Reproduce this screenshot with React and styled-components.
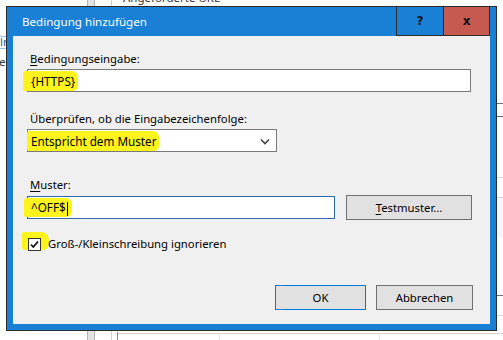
import styled, { createGlobalStyle } from 'styled-components';

const GlobalStyle = createGlobalStyle`
  html, body {
    margin: 0;
    padding: 0;
    background: #ffffff;
    font-family: "Noto Sans", "Segoe UI", sans-serif;
    font-size: 11.3px;
    color: #000;
  }
`;

// line remnants of the list view that sits behind the dialog
const lines = [
  ['#e3e3e3', 88, 0, 6, 340],
  ['#b4b4b4', 87, 0, 1, 340],
  ['#b4b4b4', 94, 0, 1, 340],
  ['#d0d0d0', 111, 0, 1, 340],
  ['#8a8a8a', 117, 332, 1, 8],
  ['#d6d6d6', 118, 333, 385, 1],
  ['#e6e6e6', 219, 334, 1, 6],
  ['#e6e6e6', 379, 334, 1, 6],
  ['#9ec5e8', 0, 36, 8, 1],
  ['#9ec5e8', 0, 48, 8, 1],
  ['#707070', 496, 103, 7, 1],
  ['#707070', 496, 116, 7, 1],
  ['#d8d8d8', 496, 177, 7, 1],
  ['#d8d8d8', 496, 197, 7, 1],
  ['#f6f6f6', 496, 198, 7, 40],
  ['#707070', 496, 295, 7, 1],
  ['#d8d8d8', 496, 315, 7, 1],
];

const Desktop = styled.div`
  position: relative;
  width: 503px;
  height: 340px;
  overflow: hidden;
  background-color: #fff;
  background-repeat: no-repeat;
  background-image: ${lines.map(([c]) => `linear-gradient(${c}, ${c})`).join(', ')};
  background-position: ${lines.map(([, x, y]) => `${x}px ${y}px`).join(', ')};
  background-size: ${lines.map(([, , , w, h]) => `${w}px ${h}px`).join(', ')};
`;

const BackText = styled.div`
  position: absolute;
  font-size: 11.5px;
  color: ${(p) => p.$color || '#333'};
  white-space: nowrap;
`;

const Dialog = styled.div`
  position: absolute;
  left: 6px;
  top: 6px;
  width: 489px;
  height: 323px;
  border: 1px solid #2b2b2b;
  background: #1a80d6;
  display: flex;
  flex-direction: column;
`;

const TitleBar = styled.div`
  height: 29px;
  display: flex;
  align-items: stretch;
  padding-right: 6px;
`;

const Title = styled.div`
  flex: 1;
  color: #fff;
  font-size: 11.6px;
  padding-left: 15px;
  display: flex;
  align-items: center;
`;

const CaptionButton = styled.div`
  width: ${(p) => p.$w}px;
  margin-top: -1px;
  height: 30px;
  box-sizing: border-box;
  border: 1px solid #2b2b2b;
  border-left: ${(p) => (p.$first ? '1px solid #2b2b2b' : 'none')};
  background: ${(p) => p.$bg};
  display: flex;
  align-items: center;
  justify-content: center;
  font-family: "DejaVu Sans", sans-serif;
  font-weight: bold;
  font-size: 12px;
  color: #111;
`;

const Body = styled.div`
  flex: 1;
  margin: 0 6px 6px 6px;
  background: #f0f0f0;
  padding: 15px 16px 14px 14px;
  display: flex;
  flex-direction: column;
`;

const Label = styled.div`
  line-height: 16px;
  height: 16px;
  padding-left: 3px;
  margin-top: ${(p) => p.$mt || 0}px;
  margin-bottom: 2px;
  u {
    text-decoration: underline;
    text-underline-offset: 2px;
  }
`;

const Field = styled.div`
  box-sizing: border-box;
  width: ${(p) => p.$w}px;
  height: 23px;
  background: #fff;
  border: 1px solid ${(p) => (p.$focused ? '#2a6aa8' : '#7a7a7a')};
  display: flex;
  align-items: center;
  padding-left: 3px;
  position: relative;
`;

const Mark = styled.span`
  background: #fcf41c;
  border-radius: 3px 6px 5px 2px;
  margin-left: ${(p) => -p.$l}px;
  padding: ${(p) => `${p.$t || 1}px ${p.$r}px ${p.$b || 1}px ${p.$l}px`};
  line-height: 16px;
  font-size: 11.7px;
  position: relative;
  z-index: 1;
`;

const Caret = styled.span`
  display: inline-block;
  width: 1px;
  height: 14px;
  background: #000;
  vertical-align: middle;
  margin-left: 1px;
`;

const Chevron = styled.svg`
  position: absolute;
  right: 6px;
  top: 8px;
`;

const Row = styled.div`
  display: flex;
  align-items: center;
  gap: 11px;
`;

const Button = styled.div`
  box-sizing: border-box;
  width: ${(p) => p.$w}px;
  height: 25px;
  background: #e1e1e1;
  border: 1px solid ${(p) => (p.$default ? '#0078d7' : '#707070')};
  display: flex;
  align-items: center;
  justify-content: center;
  u {
    text-decoration: underline;
    text-underline-offset: 2px;
  }
`;

const CheckRow = styled.div`
  margin-top: 15px;
  height: 18px;
  display: flex;
  align-items: center;
  gap: 7px;
  padding-left: 1px;
  position: relative;
`;

const CheckMark = styled.span`
  position: absolute;
  left: -5px;
  top: -3px;
  width: 27px;
  height: 18px;
  background: #fcf41c;
  border-radius: 2px 8px 6px 3px;
`;

const Box = styled.span`
  position: relative;
  z-index: 1;
  box-sizing: border-box;
  width: 13px;
  height: 13px;
  border: 1px solid #333;
  background: #fff;
  display: flex;
  align-items: center;
  justify-content: center;
`;

const CheckLabel = styled.span`
  position: relative;
  z-index: 1;
  line-height: 16px;
`;

const Footer = styled.div`
  margin-top: auto;
  display: flex;
  justify-content: flex-end;
  gap: 10px;
  padding-right: 1px;
`;

export default function App() {
  return (
    <>
      <GlobalStyle />
      <Desktop>
        <BackText style={{ left: 123, top: -10 }}>Angeforderte URL</BackText>
        <BackText style={{ left: 0, top: 34 }} $color="#2a5f9c">lr</BackText>
        <BackText style={{ left: -1, top: 54 }}>e</BackText>

        <Dialog>
          <TitleBar>
            <Title>Bedingung hinzufügen</Title>
            <CaptionButton $w={48} $bg="#1a80d6" $first>?</CaptionButton>
            <CaptionButton $w={46} $bg="#c75a50">x</CaptionButton>
          </TitleBar>
          <Body>
            <Label>
              <u>B</u>edingungseingabe:
            </Label>
            <Field $w={444}>
              <Mark $l={8} $r={3} $t={2} $b={2}>{'{HTTPS}'}</Mark>
            </Field>

            <Label $mt={19}>Überprüfen, ob die Eingabezeichenfolge:</Label>
            <Field $w={250}>
              <Mark $l={4} $r={3} $t={2} $b={2}>Entspricht dem Muster</Mark>
              <Chevron width="10" height="7" viewBox="0 0 10 7">
                <path d="M1 1.5 L5 5.5 L9 1.5" fill="none" stroke="#444" strokeWidth="1.6" />
              </Chevron>
            </Field>

            <Label $mt={25}>
              <u>M</u>uster:
            </Label>
            <Row>
              <Field $w={308} $focused>
                <Mark $l={7} $r={4} $t={1} $b={1}>
                  ^OFF$<Caret />
                </Mark>
              </Field>
              <Button $w={126}>
                <span>
                  <u>T</u>estmuster...
                </span>
              </Button>
            </Row>

            <CheckRow>
              <CheckMark />
              <Box>
                <svg width="11" height="11" viewBox="0 0 11 11">
                  <path d="M2 5.5 L4.3 8 L9 2.5" fill="none" stroke="#111" strokeWidth="1.8" />
                </svg>
              </Box>
              <CheckLabel>Groß-/Kleinschreibung ignorieren</CheckLabel>
            </CheckRow>

            <Footer>
              <Button $w={91} $default>OK</Button>
              <Button $w={97}>Abbrechen</Button>
            </Footer>
          </Body>
        </Dialog>
      </Desktop>
    </>
  );
}
